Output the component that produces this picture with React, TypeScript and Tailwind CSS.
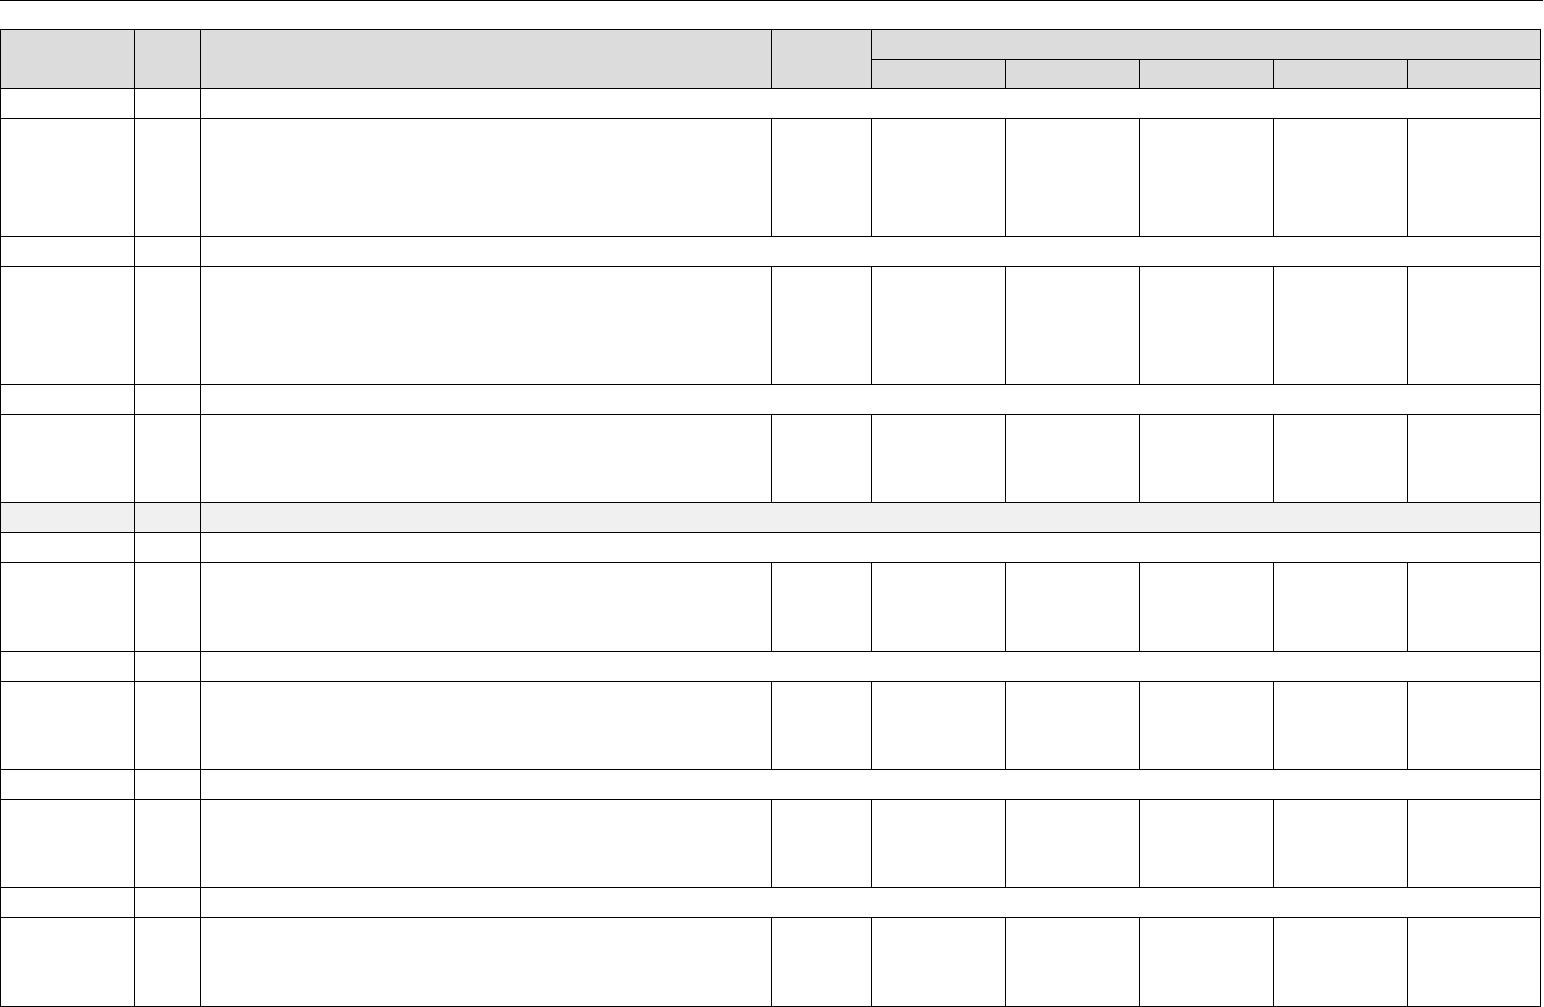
const subCols = [0, 1, 2, 3, 4]

type Row = { kind: 'section' | 'data'; h: number; shade?: boolean }

const rows: Row[] = [
  { kind: 'section', h: 30 },
  { kind: 'data', h: 118 },
  { kind: 'section', h: 30 },
  { kind: 'data', h: 118 },
  { kind: 'section', h: 30 },
  { kind: 'data', h: 88 },
  { kind: 'section', h: 30, shade: true },
  { kind: 'section', h: 30 },
  { kind: 'data', h: 89 },
  { kind: 'section', h: 30 },
  { kind: 'data', h: 88 },
  { kind: 'section', h: 30 },
  { kind: 'data', h: 88 },
  { kind: 'section', h: 30 },
  { kind: 'data', h: 89 },
]

const cell = 'border border-black p-0'

export default function App() {
  return (
    <div className="min-h-[1007px] w-[1544px] bg-white font-['Liberation_Sans',Arial,sans-serif] text-sm text-black">
      <div className="h-px w-[1543px] bg-black" />
      <div className="pt-[28px]">
        <table className="w-[1540px] table-fixed border-collapse">
          <colgroup>
            <col className="w-[134px]" />
            <col className="w-[66px]" />
            <col className="w-[571px]" />
            <col className="w-[100px]" />
            <col className="w-[134px]" />
            <col className="w-[134px]" />
            <col className="w-[134px]" />
            <col className="w-[134px]" />
            <col className="w-[133px]" />
          </colgroup>
          <thead className="bg-[#dcdcdc]">
            <tr className="h-[30px]">
              <th rowSpan={2} className={cell} />
              <th rowSpan={2} className={cell} />
              <th rowSpan={2} className={cell} />
              <th rowSpan={2} className={cell} />
              <th colSpan={5} className={cell} />
            </tr>
            <tr className="h-[29px]">
              {subCols.map((i) => (
                <th key={i} className={cell} />
              ))}
            </tr>
          </thead>
          <tbody>
            {rows.map((r, idx) =>
              r.kind === 'section' ? (
                <tr key={idx} className={r.shade ? 'h-[30px] bg-[#f0f0f0]' : 'h-[30px]'}>
                  <td className={cell} />
                  <td className={cell} />
                  <td colSpan={7} className={cell} />
                </tr>
              ) : (
                <tr key={idx} style={{ height: r.h }}>
                  <td className={cell} />
                  <td className={cell} />
                  <td className={cell} />
                  <td className={cell} />
                  {subCols.map((i) => (
                    <td key={i} className={cell} />
                  ))}
                </tr>
              ),
            )}
          </tbody>
        </table>
      </div>
    </div>
  )
}
